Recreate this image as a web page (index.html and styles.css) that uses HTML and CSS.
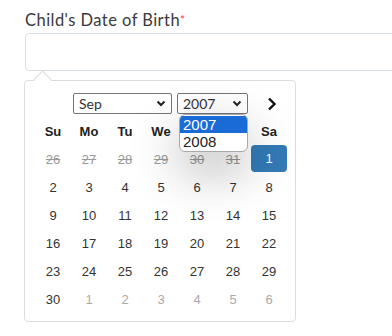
FILE: index.html
```html
<!DOCTYPE html>
<html lang="en">
<head>
    <meta charset="UTF-8">
    <meta name="viewport" content="width=device-width, initial-scale=1.0">
    <link rel="stylesheet" href="styles.css">
    <title>Date of birth</title>
</head>
<body>
    <div class="field">
        <label class="label">Child's Date of Birth<span class="req">*</span></label>
        <div class="input"></div>

        <div class="picker">
            <div class="picker-head">
                <div class="select month">
                    <span>Sep</span>
                    <svg width="10" height="7" viewBox="0 0 10 7"><path d="M1.5 1.5 L5 5 L8.5 1.5" fill="none" stroke="#222" stroke-width="2"/></svg>
                </div>
                <div class="select year">
                    <span>2007</span>
                    <svg width="10" height="7" viewBox="0 0 10 7"><path d="M1.5 1.5 L5 5 L8.5 1.5" fill="none" stroke="#222" stroke-width="2"/></svg>
                    <ul class="options">
                        <li class="picked">2007</li>
                        <li>2008</li>
                    </ul>
                </div>
                <svg class="next" width="10" height="14" viewBox="0 0 10 14"><path d="M2 1.5 L7.5 7 L2 12.5" fill="none" stroke="#111" stroke-width="2.4"/></svg>
            </div>

            <div class="grid">
                <span class="dow">Su</span>
                <span class="dow">Mo</span>
                <span class="dow">Tu</span>
                <span class="dow">We</span>
                <span class="dow">Th</span>
                <span class="dow">Fr</span>
                <span class="dow">Sa</span>

                <span class="day old">26</span>
                <span class="day old">27</span>
                <span class="day old">28</span>
                <span class="day old">29</span>
                <span class="day old">30</span>
                <span class="day old">31</span>
                <span class="day active">1</span>

                <span class="day">2</span><span class="day">3</span><span class="day">4</span><span class="day">5</span><span class="day">6</span><span class="day">7</span><span class="day">8</span>
                <span class="day">9</span><span class="day">10</span><span class="day">11</span><span class="day">12</span><span class="day">13</span><span class="day">14</span><span class="day">15</span>
                <span class="day">16</span><span class="day">17</span><span class="day">18</span><span class="day">19</span><span class="day">20</span><span class="day">21</span><span class="day">22</span>
                <span class="day">23</span><span class="day">24</span><span class="day">25</span><span class="day">26</span><span class="day">27</span><span class="day">28</span><span class="day">29</span>

                <span class="day">30</span>
                <span class="day new">1</span>
                <span class="day new">2</span>
                <span class="day new">3</span>
                <span class="day new">4</span>
                <span class="day new">5</span>
                <span class="day new">6</span>
            </div>
        </div>
    </div>
</body>
</html>
```

FILE: styles.css
```css
*{
    box-sizing: border-box;
}

body{
    margin: 0;
    background-color: white;
    font-family: Lato, "Open Sans", sans-serif;
    overflow: hidden;
}

.field{
    padding: 10px 0 0 24px;
}

.label{
    display: block;
    font-size: 16.5px;
    letter-spacing: 0.45px;
    color: #3a3a3a;
    height: 23px;
    line-height: 20px;
    padding-left: 1px;
}

.req{
    color: #e0474c;
    font-size: 12px;
    letter-spacing: 0;
    vertical-align: top;
}

.input{
    width: 420px;
    height: 38px;
    border: 1px solid #d7dfe5;
    border-radius: 4px;
    margin-left: 1px;
}

.picker{
    position: relative;
    width: 272px;
    margin-top: 9px;
    border: 1px solid #dcdcdc;
    border-radius: 4px;
    padding: 11px 8px 8px 10px;
    background-color: white;
}

.picker::before{
    content: '';
    position: absolute;
    top: -8px;
    left: 11px;
    width: 12px;
    height: 12px;
    background-color: white;
    border-top: 1px solid #dcdcdc;
    border-left: 1px solid #dcdcdc;
    transform: rotate(45deg);
}

.picker-head{
    display: flex;
    align-items: center;
    padding-left: 38px;
    height: 23px;
}

.select{
    position: relative;
    display: flex;
    align-items: center;
    justify-content: space-between;
    height: 21px;
    border: 1px solid #767676;
    border-radius: 2px;
    padding: 0 5px 0 5px;
    font-size: 14px;
    color: #333;
}

.month{
    width: 99px;
}

.year{
    width: 71px;
    margin-left: 5px;
}

.next{
    margin-left: 19px;
}

.options{
    position: absolute;
    top: 20px;
    left: 1px;
    width: 69px;
    margin: 0;
    padding: 1px 0;
    list-style: none;
    background-color: white;
    border: 1px solid #a8a8a8;
    border-radius: 6px;
    box-shadow: 0 18px 50px rgba(0, 0, 0, 0.3);
    overflow: hidden;
    z-index: 2;
    font-family: "Liberation Sans", Arial, sans-serif;
    font-size: 15px;
}

.options li{
    height: 17px;
    line-height: 17px;
    padding-left: 3px;
    color: #222;
}

.options li.picked{
    background-color: #1a6bd6;
    color: white;
}

.grid{
    display: grid;
    grid-template-columns: repeat(7, 36px);
    grid-auto-rows: 28px;
    margin-top: 2px;
    font-family: "Liberation Sans", Arial, sans-serif;
    font-size: 13px;
}

.dow, .day{
    display: flex;
    align-items: center;
    justify-content: center;
}

.dow{
    font-weight: bold;
    color: #222;
}

.day{
    color: #333;
}

.day.old{
    color: #999;
    text-decoration: line-through;
}

.day.new{
    color: #aaa;
}

.day.active{
    background-color: #337ab7;
    color: white;
    border-radius: 4px;
    margin: 0 0 1px 0;
}
```
